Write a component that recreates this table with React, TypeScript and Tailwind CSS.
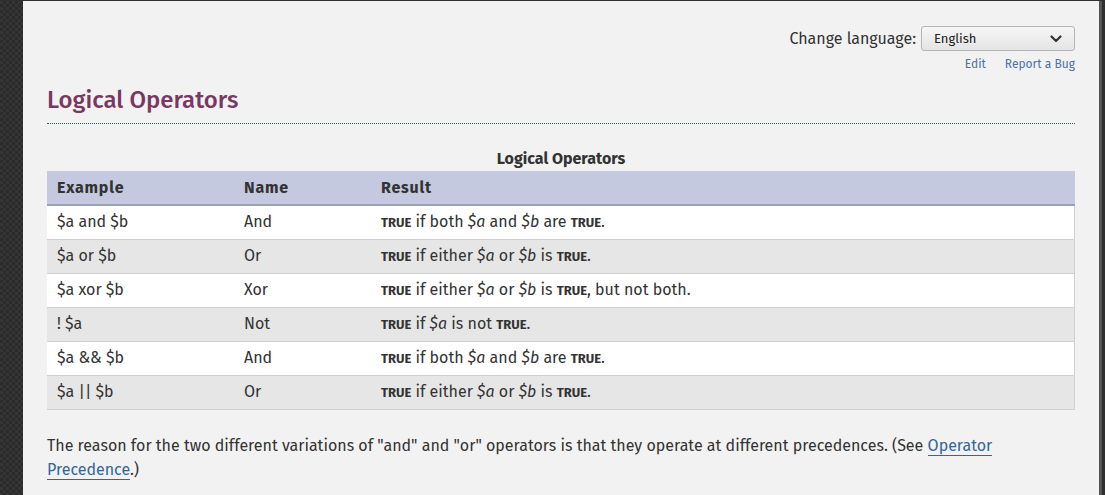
import React from "react";

const T = () => <strong className="text-[13px] font-bold text-[#333]">TRUE</strong>;
const V = ({ c }: { c: string }) => <em className="italic">${c}</em>;

const rows: { ex: string; name: string; res: React.ReactNode }[] = [
  { ex: "$a and $b", name: "And", res: <><T /> if both <V c="a" /> and <V c="b" /> are <T />.</> },
  { ex: "$a or $b", name: "Or", res: <><T /> if either <V c="a" /> or <V c="b" /> is <T />.</> },
  { ex: "$a xor $b", name: "Xor", res: <><T /> if either <V c="a" /> or <V c="b" /> is <T />, but not both.</> },
  { ex: "! $a", name: "Not", res: <><T /> if <V c="a" /> is not <T />.</> },
  { ex: "$a && $b", name: "And", res: <><T /> if both <V c="a" /> and <V c="b" /> are <T />.</> },
  { ex: "$a || $b", name: "Or", res: <><T /> if either <V c="a" /> or <V c="b" /> is <T />.</> },
];

export default function App() {
  return (
    <div
      className="flex w-[1105px] h-[495px] overflow-hidden bg-[#2f2f2f] pt-px text-[#333]"
      style={{ fontFamily: '"Fira Sans", Roboto, "Noto Sans", sans-serif' }}
    >
      <div className="w-[23px] shrink-0 bg-[repeating-conic-gradient(#2b2b2b_0%_25%,#353535_0%_50%)] bg-[length:6px_6px]" />
      <main className="w-[1076px] shrink-0 bg-[#f2f2f2] px-6 pt-[25px]">
        <div className="flex justify-end items-center gap-[5px]">
          <span className="text-[16px] leading-[25px] text-[#333]">Change language:</span>
          <div className="w-[154px] h-[25px] rounded-[3px] border border-[#b5b5b5] bg-gradient-to-b from-[#f6f6f6] to-[#e4e4e4] flex items-center justify-between pl-[12px] pr-[12px]">
            <span className="text-[13px] text-[#222]">English</span>
            <svg width="12" height="8" viewBox="0 0 12 8" fill="none">
              <path d="M1.5 1.5 L6 6 L10.5 1.5" stroke="#333" strokeWidth="2.2" strokeLinecap="round" strokeLinejoin="round" />
            </svg>
          </div>
        </div>
        <div className="flex justify-end gap-[19px] mt-[4px] text-[12px] leading-[18px] text-[#4a72a4]">
          <span>Edit</span>
          <span>Report a Bug</span>
        </div>
        <h1 className="mt-[12px] text-[24px] leading-[30px] font-medium text-[#793862]">Logical Operators</h1>
        <div className="mt-[8px] border-b border-dotted border-[#793862]" />
        <div className="mt-[22px] text-center font-bold text-[16px] leading-[25px] text-[#333]">Logical Operators</div>
        <table className="w-[1028px] border-collapse text-[16px] text-[#333]">
          <thead>
            <tr className="bg-[#c4c9df] h-[34px] border-b-2 border-[#9aa0c0]">
              <th className="w-[187px] text-left pl-[10px] font-bold tracking-[0.8px]">Example</th>
              <th className="w-[137px] text-left pl-[10px] font-bold tracking-[0.8px]">Name</th>
              <th className="text-left pl-[10px] font-bold tracking-[0.8px] border-r border-[#c4c9df]">Result</th>
            </tr>
          </thead>
          <tbody>
            {rows.map((r, i) => (
              <tr key={i} className={`h-[34px] border-b border-[#d0d0d0] ${i % 2 === 0 ? "bg-white" : "bg-[#e6e6e6]"}`}>
                <td className="pl-[10px]">{r.ex}</td>
                <td className="pl-[10px]">{r.name}</td>
                <td className="pl-[10px] border-r border-[#d0d0d0]">{r.res}</td>
              </tr>
            ))}
          </tbody>
        </table>
        <p className="mt-[24px] text-[16px] leading-[24px] text-[#333]">
          The reason for the two different variations of "and" and "or" operators is that they operate at different precedences. (See{" "}
          <a className="text-[#369] border-b border-[#369]">Operator Precedence</a>.)
        </p>
      </main>
      <div className="w-[3px] shrink-0 bg-[#555]" />
      <div className="flex-1 bg-[#2f2f2f]" />
    </div>
  );
}
